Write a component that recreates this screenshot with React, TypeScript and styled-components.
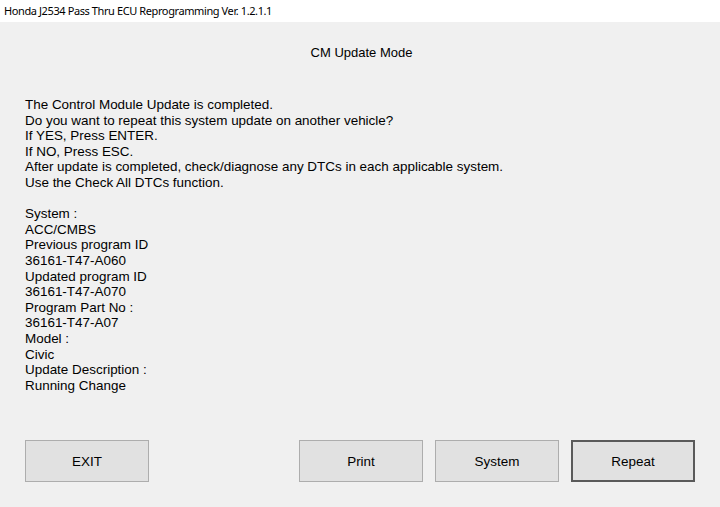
import React from "react";
import styled, { createGlobalStyle } from "styled-components";

const Global = createGlobalStyle`
  html, body { margin: 0; padding: 0; background: #f0f0f0; }
  #root { width: 720px; height: 507px; }
`;

const Window = styled.div`
  width: 720px;
  height: 507px;
  display: flex;
  flex-direction: column;
  background: #f0f0f0;
  overflow: hidden;
`;

const TitleBar = styled.div`
  height: 22px;
  background: #ffffff;
  display: flex;
  align-items: center;
  padding-left: 4px;
  font-family: "Noto Sans", "Open Sans", sans-serif;
  font-size: 11px;
  letter-spacing: -0.4px;
  color: #000;
  box-sizing: border-box;
  padding-bottom: 1px;
`;

const Body = styled.div`
  flex: 1;
  display: flex;
  flex-direction: column;
  padding: 0 25px;
  font-family: "Liberation Sans", Arial, sans-serif;
  font-size: 13.45px;
  color: #000;
`;

const Heading = styled.div`
  margin-top: 23px;
  height: 16px;
  line-height: 16px;
  text-align: center;
  padding-left: 3px;
  font-size: 13px;
`;

const Message = styled.div`
  margin-top: 36px;
  line-height: 15.6px;
  white-space: pre;
  height: 343px;
`;

const ButtonRow = styled.div`
  display: flex;
  align-items: center;
  gap: 12px;
`;

const Spacer = styled.div`
  flex: 1;
`;

const Button = styled.button<{ $default?: boolean }>`
  width: 124px;
  height: 42px;
  box-sizing: border-box;
  background: #e1e1e1;
  border: ${(p) => (p.$default ? "2px solid #5a5a5a" : "1px solid #adadad")};
  font-family: "Liberation Sans", Arial, sans-serif;
  font-size: 13.45px;
  color: #000;
  padding: 0;
  margin: 0;
`;

const lines = [
  "The Control Module Update is completed.",
  "Do you want to repeat this system update on another vehicle?",
  "If YES, Press ENTER.",
  "If NO, Press ESC.",
  "After update is completed, check/diagnose any DTCs in each applicable system.",
  "Use the Check All DTCs function.",
  "",
  "System :",
  "ACC/CMBS",
  "Previous program ID",
  "36161-T47-A060",
  "Updated program ID",
  "36161-T47-A070",
  "Program Part No :",
  "36161-T47-A07",
  "Model :",
  "Civic",
  "Update Description :",
  "Running Change",
];

export default function App() {
  return (
    <Window>
      <Global />
      <TitleBar>Honda J2534 Pass Thru ECU Reprogramming Ver. 1.2.1.1</TitleBar>
      <Body>
        <Heading>CM Update Mode</Heading>
        <Message>{lines.join("\n")}</Message>
        <ButtonRow>
          <Button>EXIT</Button>
          <Spacer />
          <Button>Print</Button>
          <Button>System</Button>
          <Button $default>Repeat</Button>
        </ButtonRow>
      </Body>
    </Window>
  );
}
